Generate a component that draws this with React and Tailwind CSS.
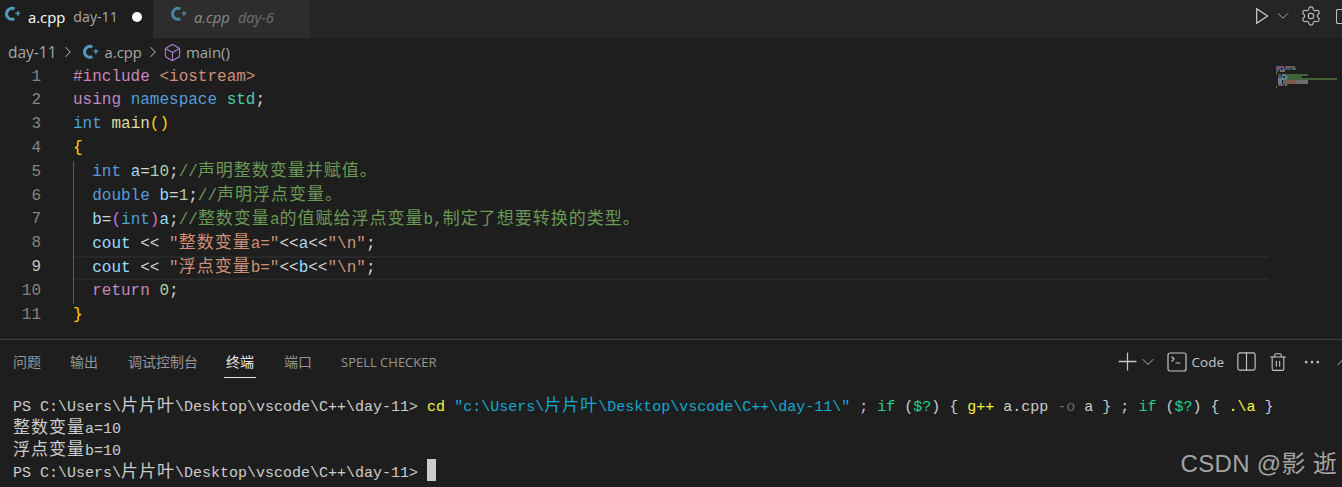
import { ChevronDown, ChevronRight, ChevronUp, Box, Settings, Plus, SquareTerminal, Columns2, Trash2, Ellipsis } from 'lucide-react'

const UI_FONT = "font-['Open_Sans','Noto_Sans_CJK_SC',sans-serif]"
const MONO_FONT = "font-['Liberation_Mono','Noto_Sans_CJK_SC',monospace]"

// c++ file icon
const CppIcon = ({ className }) => (
    <svg className={className} viewBox="0 0 16 16" fill="none" stroke="#519aba">
        <path d="M9.4 3A5.4 5.4 0 1 0 9.4 12.6" strokeWidth="3" />
        <path d="M10.4 7.4h5M12.9 4.9v5" strokeWidth="1.4" />
    </svg>
)

const RunIcon = ({ className }) => (
    <svg className={className} viewBox="0 0 14 18" fill="none" stroke="currentColor" strokeWidth="1.3">
        <path d="M1.7 1.7L12.5 9L1.7 16.3Z" />
    </svg>
)

// wide characters take two latin cells
const Zh = ({ children }) => <span className="text-[17px] tracking-[1px]">{children}</span>

const kw = 'text-[#569cd6]'
const ctl = 'text-[#c586c0]'
const str = 'text-[#ce9178]'
const num = 'text-[#b5cea8]'
const vr = 'text-[#9cdcfe]'
const fn = 'text-[#dcdcaa]'
const ty = 'text-[#4ec9b0]'
const com = 'text-[#6a9955]'
const gold = 'text-[#ffd700]'
const orchid = 'text-[#da70d6]'

const S = ({ c, children }) => <span className={c}>{children}</span>

const LINES = [
    <><S c={ctl}>#include</S> <S c={str}>{'<iostream>'}</S></>,
    <><S c={ctl}>using</S> <S c={kw}>namespace</S> <S c={ty}>std</S>;</>,
    <><S c={kw}>int</S> <S c={fn}>main</S><S c={gold}>()</S></>,
    <S c={gold}>{'{'}</S>,
    <>  <S c={kw}>int</S> <S c={vr}>a</S>=<S c={num}>10</S>;<S c={com}>//<Zh>声明整数变量并赋值。</Zh></S></>,
    <>  <S c={kw}>double</S> <S c={vr}>b</S>=<S c={num}>1</S>;<S c={com}>//<Zh>声明浮点变量。</Zh></S></>,
    <>  <S c={vr}>b</S>=<S c={orchid}>(</S><S c={kw}>int</S><S c={orchid}>)</S><S c={vr}>a</S>;<S c={com}>//<Zh>整数变量</Zh>a<Zh>的值赋给浮点变量</Zh>b,<Zh>制定了想要转换的类型。</Zh></S></>,
    <>  <S c={vr}>cout</S> {'<<'} <S c={str}>"<Zh>整数变量</Zh>a="</S>{'<<'}<S c={vr}>a</S>{'<<'}<S c={str}>"\n"</S>;</>,
    <>  <S c={vr}>cout</S> {'<<'} <S c={str}>"<Zh>浮点变量</Zh>b="</S>{'<<'}<S c={vr}>b</S>{'<<'}<S c={str}>"\n"</S>;</>,
    <>  <S c={ctl}>return</S> <S c={num}>0</S>;</>,
    <S c={gold}>{'}'}</S>,
]

// minimap rows: [x, y, width, colour]
const MINIMAP = [
    [0, 0, 8, '#8a5f86'], [9, 0, 10, '#8d6a5c'],
    [0, 2, 5, '#8a5f86'], [6, 2, 9, '#3f6d94'], [16, 2, 4, '#3f8a78'],
    [0, 4, 3, '#3f6d94'], [4, 4, 5, '#8f8f78'],
    [0, 6, 1, '#a08a20'],
    [2, 8, 3, '#3f6d94'], [6, 8, 4, '#7f9fb0'], [10, 8, 22, '#4f7a42'],
    [2, 10, 6, '#3f6d94'], [9, 10, 3, '#7f9fb0'], [12, 10, 14, '#4f7a42'],
    [2, 12, 9, '#7f9fb0'], [11, 12, 50, '#4f7a42'],
    [2, 14, 4, '#7f9fb0'], [7, 14, 3, '#777777'], [10, 14, 11, '#a0705a'], [21, 14, 11, '#888888'],
    [2, 16, 4, '#7f9fb0'], [7, 16, 3, '#777777'], [10, 16, 11, '#a0705a'], [21, 16, 11, '#888888'],
    [2, 18, 6, '#8a5f86'], [9, 18, 2, '#88957a'],
    [0, 20, 1, '#a08a20'],
]

const TabBar = () => (
    <div className={`flex h-[38px] bg-[#252526] ${UI_FONT} text-[14.8px] leading-[20px]`}>
        <div className="flex w-[153px] items-center bg-[#1e1e1e] pb-[4px] pl-[5px]">
            <CppIcon className="mb-[6px] h-[16px] w-[16px]" />
            <span className="ml-[7px] text-white">a.cpp</span>
            <span className="ml-[8px] text-[14.2px] text-[#a9a9a9]">day-11</span>
            <span className="ml-[14px] h-[10px] w-[10px] rounded-full bg-white" />
        </div>
        <div className="flex w-[157px] items-center bg-[#2d2d2d] pb-[4px] pl-[18px] italic">
            <CppIcon className="mb-[6px] h-[16px] w-[16px] opacity-80" />
            <span className="ml-[7px] text-[#8a8a8a]">a.cpp</span>
            <span className="ml-[8px] text-[14.6px] text-[#6f6f6f]">day-6</span>
        </div>
        <div className="ml-auto flex items-center pb-[6px] text-[#c5c5c5]">
            <RunIcon className="h-[18px] w-[14px]" />
            <ChevronDown className="ml-[5px] h-[18px] w-[18px]" strokeWidth={1.1} />
            <Settings className="ml-[8px] h-[22px] w-[22px]" strokeWidth={1.2} />
            <div className="ml-[14px] h-[15px] w-[6px] rounded-l-[2px] border-y border-l border-[#c5c5c5]" />
        </div>
    </div>
)

const Breadcrumbs = () => (
    <div className={`flex h-[27.7px] items-center pb-[1px] pl-[8px] pt-[2px] text-[14.8px] leading-[20px] text-[#a6a6a6] ${UI_FONT}`}>
        <span className="text-[15.5px]">day-11</span>
        <ChevronRight className="ml-[2px] h-[18px] w-[18px]" strokeWidth={1.4} />
        <CppIcon className="ml-[6px] h-[16px] w-[16px]" />
        <span className="ml-[6px]">a.cpp</span>
        <ChevronRight className="ml-[2px] h-[18px] w-[18px]" strokeWidth={1.4} />
        <Box className="ml-[1px] h-[19px] w-[19px] text-[#b180d7]" strokeWidth={1.3} />
        <span className="ml-[4px] text-[15px]">main()</span>
    </div>
)

const Editor = () => (
    <div className={`relative h-[273.3px] ${MONO_FONT} text-[16px] leading-[23.8px] text-[#d4d4d4]`}>
        {LINES.map((line, i) => (
            <div key={i} className="flex h-[23.8px] items-center">
                <div className={`w-[41px] text-right ${i === 8 ? 'text-[#c6c6c6]' : 'text-[#858585]'}`}>{i + 1}</div>
                <div className={`ml-[32px] mr-[74px] flex h-full flex-1 items-center whitespace-pre ${i === 8 ? 'border-y-2 border-[#282828]' : ''}`}>
                    <div>{line}</div>
                </div>
            </div>
        ))}
        <div className="absolute left-[73px] top-[95px] h-[143px] w-px bg-[#5a5a5a]" />
        <svg className="absolute left-[1276px] top-0 opacity-75" width="64" height="22">
            {MINIMAP.map(([x, y, w, color], i) => <rect key={i} x={x} y={y} width={w} height="2" fill={color} />)}
        </svg>
    </div>
)

const PanelHeader = () => (
    <div className={`flex h-[44px] items-center pl-[13px] text-[14px] leading-[20px] text-[#969696] ${UI_FONT}`}>
        <span className="w-[57px]">问题</span>
        <span className="w-[58px]">输出</span>
        <span className="w-[98px]">调试控制台</span>
        <span className="relative w-[58px] text-[#e7e7e7]">
            终端
            <span className="absolute left-[-2px] top-[25px] h-px w-[32px] bg-[#e7e7e7]" />
        </span>
        <span className="w-[57px]">端口</span>
        <span className="text-[13px]">SPELL CHECKER</span>
        <div className="ml-auto flex items-center text-[#c5c5c5]">
            <Plus className="h-[29px] w-[29px]" strokeWidth={1.05} />
            <ChevronDown className="-ml-[4px] h-[20px] w-[20px]" strokeWidth={1.1} />
            <SquareTerminal className="ml-[7px] h-[24px] w-[24px]" strokeWidth={1.2} />
            <span className="ml-[3px] text-[13.5px]">Code</span>
            <Columns2 className="ml-[11px] h-[23px] w-[23px]" strokeWidth={1.2} />
            <Trash2 className="ml-[10px] h-[20px] w-[20px]" strokeWidth={1.3} />
            <Ellipsis className="ml-[14px] h-[20px] w-[20px]" strokeWidth={1.3} />
            <ChevronUp className="ml-[11px] -mr-[11px] h-[20px] w-[20px]" strokeWidth={1.1} />
        </div>
    </div>
)

const Terminal = () => (
    <div className={`pl-[13px] pt-[12px] ${MONO_FONT} text-[15px] leading-[22px] text-[#cccccc]`}>
        <div className="h-[22px] whitespace-pre">
            PS C:\Users\<Zh>片片叶</Zh>\Desktop\vscode\C++\day-11{'> '}
            <S c="text-[#f5f543]">cd</S> <S c="text-[#11a8cd]">"c:\Users\<Zh>片片叶</Zh>\Desktop\vscode\C++\day-11\"</S> ; <S c="text-[#23d18b]">if</S> (<S c="text-[#23d18b]">$?</S>) {'{ '}
            <S c="text-[#f5f543]">g++</S> a.cpp <S c="text-[#666666]">-o</S> a {'}'} ; <S c="text-[#23d18b]">if</S> (<S c="text-[#23d18b]">$?</S>) {'{ '}
            <S c="text-[#f5f543]">.\a</S> {'}'}
        </div>
        <div className="h-[22px] whitespace-pre"><Zh>整数变量</Zh>a=10</div>
        <div className="h-[22px] whitespace-pre"><Zh>浮点变量</Zh>b=10</div>
        <div className="flex h-[22px] whitespace-pre">
            <span>PS C:\Users\<Zh>片片叶</Zh>\Desktop\vscode\C++\day-11{'> '}</span>
            <span className="-mt-[3px] h-[22px] w-[9px] bg-[#cccccc]" />
        </div>
    </div>
)

export default function App() {
    return (
        <div className="relative h-[487px] w-[1342px] overflow-hidden bg-[#1e1e1e]">
            <TabBar />
            <Breadcrumbs />
            <Editor />
            <div className="h-px bg-[#414141]" />
            <PanelHeader />
            <Terminal />
            <div className="absolute right-[5px] top-[449px] font-['Liberation_Sans','Noto_Sans_CJK_SC',sans-serif] text-[24px] leading-[30px] tracking-[0.3px] text-[#a3a3a3]">CSDN @影 逝</div>
        </div>
    )
}
